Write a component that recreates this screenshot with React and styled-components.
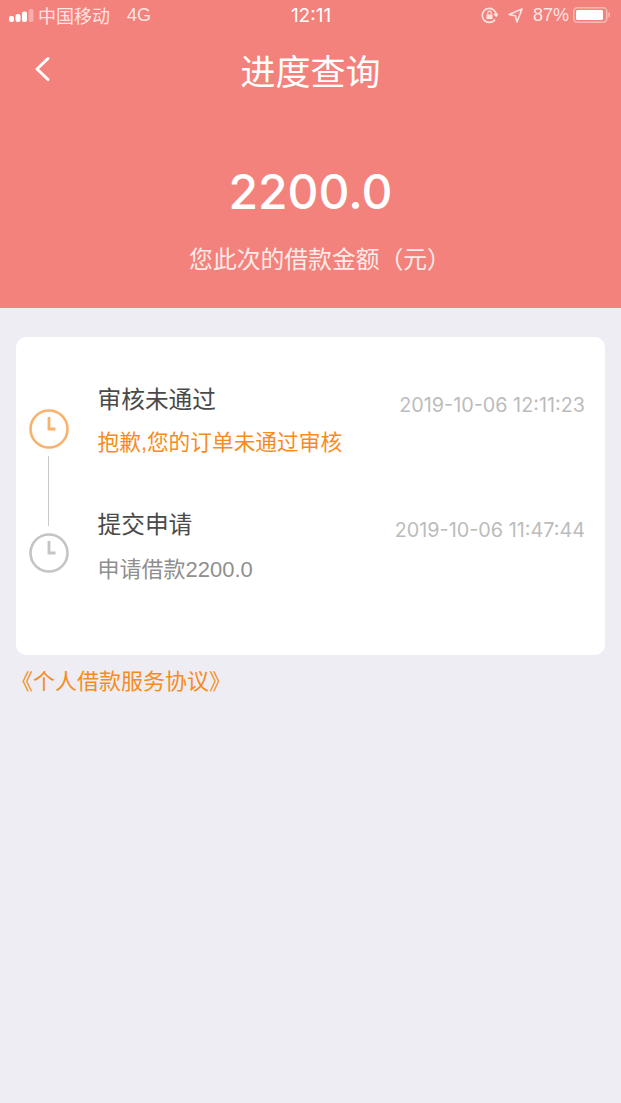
import React from "react";
import styled, { createGlobalStyle } from "styled-components";

const Global = createGlobalStyle`
  html, body { margin: 0; padding: 0; background: #eeedf3; }
  body { font-family: "Liberation Sans", "Noto Sans CJK SC", sans-serif; }
`;
const Page = styled.div`
  width: 621px; height: 1103px; background: #eeedf3; overflow: hidden;
  display: flex; flex-direction: column;
`;
const Header = styled.header`
  height: 308px; background: #f4827c; color: #fff; display: flex; flex-direction: column;
`;
const StatusBar = styled.div`
  height: 30px; padding: 0 10px 0 9px; display: grid; grid-template-columns: 1fr auto 1fr; align-items: center;
  font-size: 18px; color: #fde5e3;
`;
const StatusLeft = styled.div`display: flex; align-items: center; gap: 4px;`;
const StatusRight = styled.div`display: flex; align-items: center; justify-content: flex-end; gap: 10px;`;
const Net = styled.span`margin-left: 13px;`;
const Clock = styled.span`color: #fff; font-weight: 400; font-family: "Inter", sans-serif; font-size: 19px; padding-left: 2px;`;
const Percent = styled.span`font-size: 18px; margin-right: -6px;`;
const NavBar = styled.div`
  height: 84px; display: flex; align-items: center; justify-content: center; position: relative;
`;
const Back = styled.svg`position: absolute; left: 34px; top: 26px;`;
const Title = styled.h1`
  margin: 2px 0 0; font-size: 35px; font-weight: 400; line-height: 84px;
`;
const Amount = styled.div`
  margin-top: 43px; text-align: center; font-family: "Inter", sans-serif; font-size: 48px; font-weight: 500; line-height: 70px;
`;
const Sub = styled.div`
  margin-top: 17px; padding-left: 19px; text-align: center; font-size: 23.8px; line-height: 32px; color: #fdebe9;
`;
const Card = styled.section`
  margin: 29px 16px 0; height: 318px; box-sizing: border-box; background: #fff; border-radius: 10px; padding-top: 43px;
  display: flex; flex-direction: column;
`;
const Step = styled.div`
  display: grid; grid-template-columns: 81.5px 1fr auto; padding-right: 20px; height: ${p => p.$h}px;
`;
const Rail = styled.div`display: flex; flex-direction: column; align-items: flex-start; padding-left: 12.500px; position: relative;`;
const Icon = styled.svg`margin-top: ${p => p.$top}px; display: block;`;
const Line = styled.div`position: absolute; left: 32px; top: 76px; width: 1px; height: 70px; background: #c9c9c9;`;
const Body = styled.div`display: flex; flex-direction: column;`;
const StepTitle = styled.div`font-size: 23.7px; line-height: 40px; color: #4a4a4a;`;
const StepNote = styled.div`font-size: ${p => p.$size}px; line-height: 32px; margin-top: ${p => p.$gap}px; color: ${p => p.$c};`;
const Time = styled.div`font-size: 19.800px; line-height: 26px; margin-top: 12px; color: #bcbcbc; font-family: "Inter", "Liberation Sans", sans-serif; font-weight: 400;`;
const Agreement = styled.a`
  display: block; margin-top: 10px; padding-left: 11px; font-size: 22px; line-height: 34px; color: #f58c1e;
`;

const ClockIcon = ({ color, top }) => (
  <Icon $top={top} width="40" height="40" viewBox="0 0 40 40" fill="none" stroke={color}>
    <circle cx="20" cy="20" r="18.5" strokeWidth="2.6" />
    <path d="M20 8v12h6.500" strokeWidth="2.8" />
  </Icon>
);

export default function App() {
  return (
    <Page>
      <Global />
      <Header>
        <StatusBar>
          <StatusLeft>
            <svg width="25" height="14" viewBox="0 0 25 14">
              <rect x="0" y="8" width="5" height="6" rx="2" fill="#fff" />
              <rect x="6.5" y="6" width="5" height="8" rx="2" fill="#fff" />
              <rect x="13" y="3.5" width="5" height="10.5" rx="2" fill="#fff" />
              <rect x="19.5" y="1" width="5" height="13" rx="2" fill="#fff" opacity=".35" />
            </svg>
            <span>中国移动</span>
            <Net>4G</Net>
          </StatusLeft>
          <Clock>12:11</Clock>
          <StatusRight>
            <svg width="17" height="17" viewBox="0 0 17 17" fill="none" stroke="#fde5e3" strokeWidth="1.6">
              <path d="M14 12.5A7 7 0 1 1 15.3 8" />
              <path d="M13 7l2.3 2L17 6.8" />
              <rect x="5.5" y="7.5" width="6" height="4.5" fill="#fde5e3" stroke="none" />
              <path d="M6.7 7.5V6a1.8 1.8 0 0 1 3.6 0v1.5" strokeWidth="1.2" />
            </svg>
            <svg width="15" height="15" viewBox="0 0 15 15" fill="none" stroke="#fde5e3" strokeWidth="1.6">
              <path d="M14 1L1 6.5l6.3 1.2L9 14z" strokeLinejoin="round" />
            </svg>
            <Percent>87%</Percent>
            <svg width="38" height="16" viewBox="0 0 38 16">
              <rect x=".75" y=".75" width="33" height="14.5" rx="3.5" fill="none" stroke="#fbb7b3" strokeWidth="1.5" />
              <rect x="3" y="3" width="27" height="10" rx="1.5" fill="#fff" />
              <rect x="35.3" y="5.5" width="1.7" height="5" rx=".8" fill="#fbb7b3" />
            </svg>
          </StatusRight>
        </StatusBar>
        <NavBar>
          <Back width="18" height="26" viewBox="0 0 18 26" fill="none" stroke="#fff" strokeWidth="3" strokeLinecap="round" strokeLinejoin="round">
            <path d="M14 2.5L3 13l11 10.500" />
          </Back>
          <Title>进度查询</Title>
        </NavBar>
        <Amount>2200.0</Amount>
        <Sub>您此次的借款金额（元）</Sub>
      </Header>
      <Card>
        <Step $h={125}>
          <Rail>
            <ClockIcon color="#f9b26d" top={29} />
            <Line />
          </Rail>
          <Body>
            <StepTitle>审核未通过</StepTitle>
            <StepNote $size={21.7} $gap={7} $c="#f58c1e">抱歉,您的订单未通过审核</StepNote>
          </Body>
          <Time>2019-10-06 12:11:23</Time>
        </Step>
        <Step $h={110}>
          <Rail>
            <ClockIcon color="#c4c4c4" top={28} />
          </Rail>
          <Body>
            <StepTitle>提交申请</StepTitle>
            <StepNote $size={22} $gap={9} $c="#8f8f8f">申请借款2200.0</StepNote>
          </Body>
          <Time>2019-10-06 11:47:44</Time>
        </Step>
      </Card>
      <Agreement>《个人借款服务协议》</Agreement>
    </Page>
  );
}
